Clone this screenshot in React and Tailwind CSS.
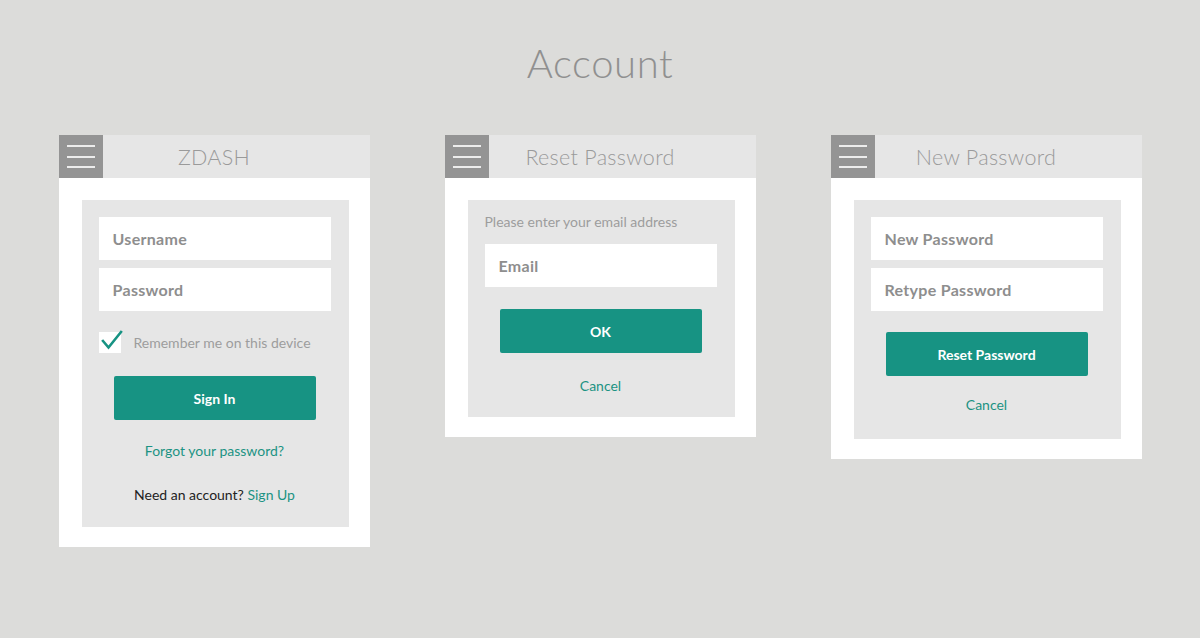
import React from "react";

const font = { fontFamily: "Lato, 'Open Sans', sans-serif" };

function Hamburger() {
  return (
    <div className="w-[44px] h-[43px] bg-[#949494] flex flex-col items-center justify-center gap-[8.5px]">
      <div className="w-[28px] h-[2px] bg-[#ececec]" />
      <div className="w-[28px] h-[2px] bg-[#ececec]" />
      <div className="w-[28px] h-[2px] bg-[#ececec]" />
    </div>
  );
}

function Card({ title, children }) {
  return (
    <div className="w-[311px] bg-white self-start">
      <div className="h-[43px] bg-[#e6e6e6] flex items-center">
        <Hamburger />
        <div className="flex-1 pr-[44px] text-center text-[21.5px] leading-[26px] font-light text-[#9a9a9a] tracking-[0.3px]">
          {title}
        </div>
      </div>
      <div className="pl-[23px] pr-[21px] pt-[22px] pb-[20px]">
        <div className="bg-[#e6e6e6] pl-[17px] pr-[18px] pt-[17px]">{children}</div>
      </div>
    </div>
  );
}

function Input({ label }) {
  return (
    <div className="h-[43px] bg-white flex items-center pl-[14px] text-[16px] font-bold text-[#8e8e8e] tracking-[0.3px]">
      {label}
    </div>
  );
}

function Button({ label, className = "" }) {
  return (
    <div
      className={
        "mx-auto w-[202px] h-[44px] bg-[#179383] rounded-[2px] flex items-center justify-center text-white text-[14px] font-bold " +
        className
      }
    >
      {label}
    </div>
  );
}

export default function App() {
  return (
    <div className="min-h-[638px] bg-[#dcdcda] flex flex-col" style={font}>
      <div className="h-[135px] pt-[38px] text-center text-[40px] leading-[50px] font-light text-[#909090] tracking-[0.6px]">
        Account
      </div>
      <div className="flex justify-center gap-[75px]">
        <Card title="ZDASH">
          <div className="flex flex-col gap-[8px]">
            <Input label="Username" />
            <Input label="Password" />
          </div>
          <div className="mt-[21px] h-[21px] flex items-center">
            <div className="relative w-[22px] h-[21px] bg-white">
              <svg className="absolute left-[1px] -top-[4px]" width="24" height="24" viewBox="0 0 24 24">
                <polyline points="3,13 8.5,19.5 21,4" fill="none" stroke="#179383" strokeWidth="2.6" strokeLinecap="square" />
              </svg>
            </div>
            <span className="ml-[13px] text-[14px] text-[#9d9d9d]">Remember me on this device</span>
          </div>
          <Button label="Sign In" className="mt-[23px]" />
          <div className="mt-[22px] text-center text-[14px] leading-[18px] text-[#1c9383]">Forgot your password?</div>
          <div className="mt-[26px] text-center text-[14px] leading-[18px] text-[#222] pb-[23px]">
            Need an account? <span className="text-[#1c9383]">Sign Up</span>
          </div>
        </Card>
        <Card title="Reset Password">
          <div className="text-[14px] leading-[10px] text-[#9d9d9d] pt-[0px]">Please enter your email address</div>
          <div className="mt-[17px]">
            <Input label="Email" />
          </div>
          <Button label="OK" className="mt-[22px]" />
          <div className="mt-[24px] text-center text-[14px] leading-[18px] text-[#1c9383] pb-[22px]">Cancel</div>
        </Card>
        <Card title="New Password">
          <div className="flex flex-col gap-[8px]">
            <Input label="New Password" />
            <Input label="Retype Password" />
          </div>
          <Button label="Reset Password" className="mt-[21px]" />
          <div className="mt-[20px] text-center text-[14px] leading-[18px] text-[#1c9383] pb-[25px]">Cancel</div>
        </Card>
      </div>
    </div>
  );
}
